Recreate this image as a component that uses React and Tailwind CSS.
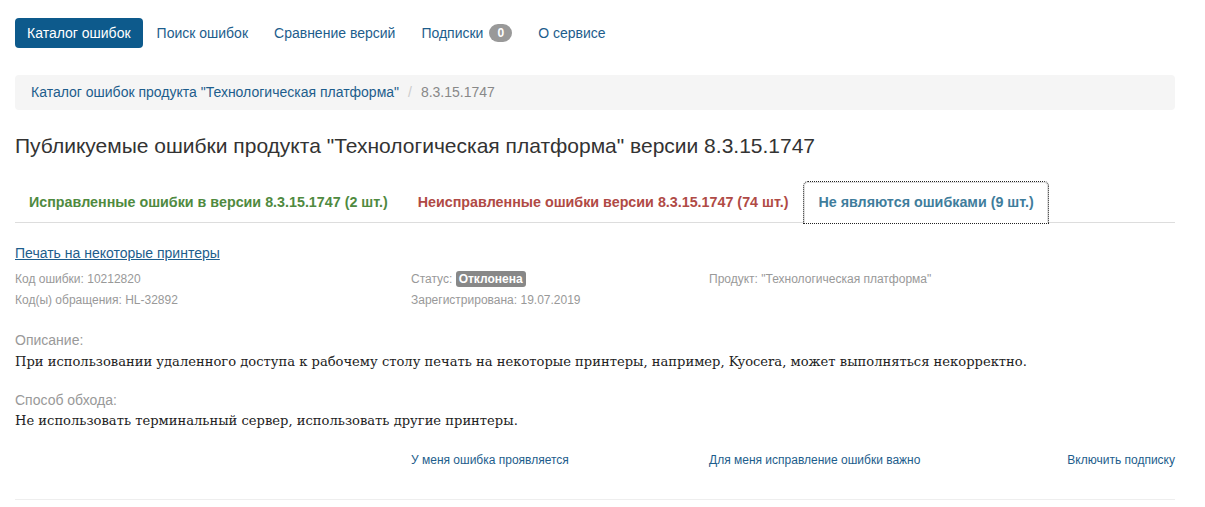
const sans = "font-['Liberation_Sans',Arial,sans-serif]";
const serif = "font-['DejaVu_Serif',Georgia,serif]";

const navItems = [
  { label: "Каталог ошибок", active: true },
  { label: "Поиск ошибок" },
  { label: "Сравнение версий" },
  { label: "Подписки", badge: "0" },
  { label: "О сервисе" },
];

const tabs = [
  { label: "Исправленные ошибки в версии 8.3.15.1747 (2 шт.)", color: "text-[#4f8a3f]" },
  { label: "Неисправленные ошибки версии 8.3.15.1747 (74 шт.)", color: "text-[#b04a45]" },
  { label: "Не являются ошибками (9 шт.)", color: "text-[#3f7d9c]", active: true },
];

export default function App() {
  return (
    <div className={`min-h-screen bg-white px-[15px] pt-[17px] text-[#333] ${sans}`}>
      <nav className="flex items-center gap-[2px] text-[14px]">
        {navItems.map((item) => (
          <a
            key={item.label}
            href="#"
            className={
              item.active
                ? "rounded-[4px] bg-[#0d5a8c] px-[12px] py-[7px] leading-[16px] text-white"
                : "flex items-center rounded-[4px] px-[12px] py-[7px] leading-[16px] text-[#1d5d8c]"
            }
          >
            {item.label}
            {item.badge && (
              <span className="ml-[6px] inline-block rounded-[10px] bg-[#999] px-[8px] py-[1px] text-[12px] font-bold leading-[16px] text-white">
                {item.badge}
              </span>
            )}
          </a>
        ))}
      </nav>

      <div className="mt-[26px] flex h-[35px] w-[1160px] items-center rounded-[4px] bg-[#f5f5f5] px-[16px] text-[14px]">
        <a href="#" className="text-[#1d5d8c]">
          Каталог ошибок продукта "Технологическая платформа"
        </a>
        <span className="px-[9px] text-[#ccc]">/</span>
        <span className="text-[#888]">8.3.15.1747</span>
      </div>

      <h3 className="mt-[24px] text-[21px] leading-[24px] text-[#333]">
        Публикуемые ошибки продукта "Технологическая платформа" версии 8.3.15.1747
      </h3>

      <div className="mt-[24px] flex w-[1160px] border-b border-[#ddd]">
        {tabs.map((t) => (
          <a
            key={t.label}
            href="#"
            className={`-mb-px mr-[2px] block rounded-t-[4px] border px-[13px] py-[10px] text-[14.3px] font-bold leading-[19px] ${t.color} ${
              t.active
                ? "border-[#ddd] border-b-white bg-white outline-1 outline-dotted outline-[#222]"
                : "border-transparent"
            }`}
          >
            {t.label}
          </a>
        ))}
      </div>

      <div className="w-[1160px]">
        <a href="#" className="mt-[21px] block text-[14px] leading-[18px] text-[#1d5d8c] underline">
          Печать на некоторые принтеры
        </a>
        <div className="mt-[7px] grid grid-cols-[396px_298px_1fr] text-[12px] leading-[21px] text-[#999]">
          <div>
            <div>Код ошибки: 10212820</div>
            <div>Код(ы) обращения: HL-32892</div>
          </div>
          <div>
            <div>
              Статус:{" "}
              <span className="rounded-[3px] bg-[#888] px-[3px] py-[1px] font-bold text-white">Отклонена</span>
            </div>
            <div>Зарегистрирована: 19.07.2019</div>
          </div>
          <div>Продукт: "Технологическая платформа"</div>
        </div>

        <div className="mt-[19px] text-[14px] leading-[20px] text-[#999]">Описание:</div>
        <p className={`mt-[2px] text-[13.1px] leading-[20px] text-[#222] ${serif}`}>
          При использовании удаленного доступа к рабочему столу печать на некоторые принтеры, например, Kyocera, может выполняться некорректно.
        </p>

        <div className="mt-[18px] text-[14px] leading-[20px] text-[#999]">Способ обхода:</div>
        <p className={`mt-[1px] text-[13.1px] leading-[20px] text-[#222] ${serif}`}>
          Не использовать терминальный сервер, использовать другие принтеры.
        </p>

        <div className="mt-[20px] grid grid-cols-[396px_298px_1fr] text-[12px] leading-[18px] text-[#1d5d8c]">
          <div />
          <a href="#">У меня ошибка проявляется</a>
          <div className="flex justify-between">
            <a href="#">Для меня исправление ошибки важно</a>
            <a href="#">Включить подписку</a>
          </div>
        </div>

        <hr className="mt-[30px] border-[#eee]" />
      </div>
    </div>
  );
}
